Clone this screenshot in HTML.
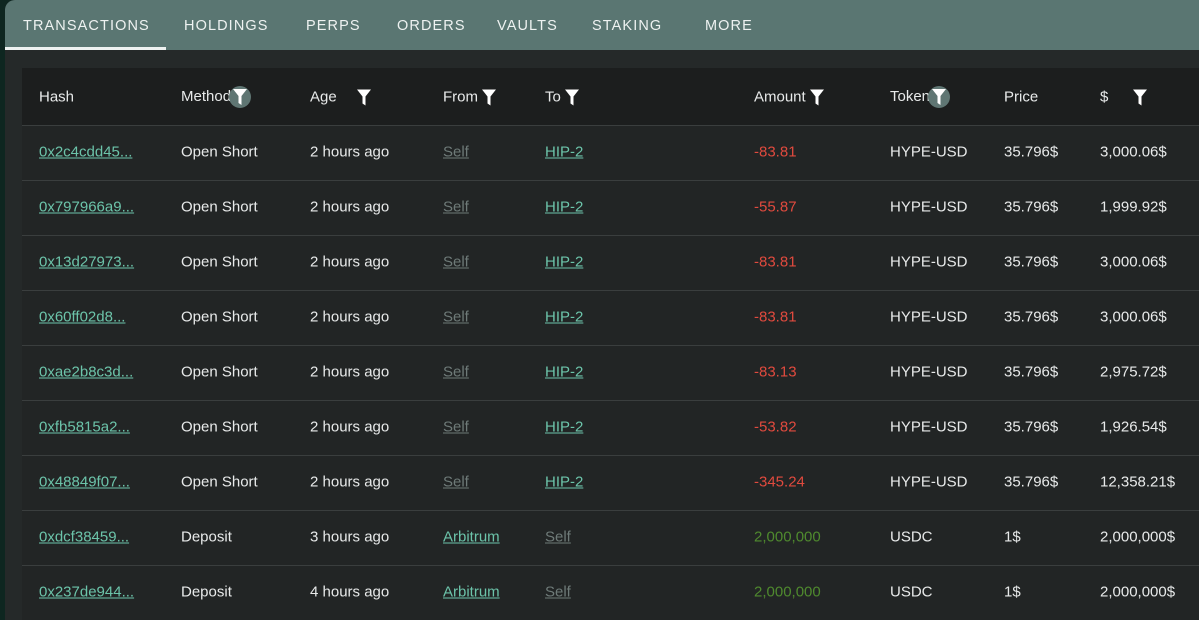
<!DOCTYPE html>
<html><head><meta charset="utf-8"><style>
*{margin:0;padding:0;box-sizing:border-box}
body{width:1199px;height:614px;overflow:hidden;background:#0e2620;font-family:"Liberation Sans",Roboto,sans-serif;color:#e8eaea}
.panel{position:absolute;left:5px;top:0;width:1200px;height:620px;background:#252929;border-top-left-radius:10px;overflow:hidden}
.tabs{height:50px;background:#5a7672;position:relative}
.tab{position:absolute;top:18px;font-size:14.5px;letter-spacing:1.1px;color:#eef2f1;font-weight:500}
.ul{position:absolute;left:0;top:47px;width:161px;height:3px;background:#eef2f1}
.card{position:absolute;left:17px;top:68px;width:1200px;height:560px;background:#222525;border-top-left-radius:8px}
.hdr{height:58px;background:#1c1e1e;position:relative;border-bottom:1px solid #3a3e3e}
.row{height:55px;position:relative;border-bottom:1px solid #3a3e3e}
.row .c{margin-top:-1px}
.c{position:absolute;top:50%;transform:translateY(-50%);font-size:15px;white-space:nowrap}
.hdr .c{font-weight:500}
a{color:#6cc4aa;text-decoration:underline}
.self{color:#6e7a78;text-decoration:underline}
.red{color:#e04a3e}.grn{color:#4f8a2e}
.f{display:inline-block;vertical-align:middle}
.fc{display:inline-block;width:22px;height:22px;border-radius:50%;background:#5f7673;vertical-align:middle;position:relative;margin-left:-2px}
.fc svg{position:absolute;left:4px;top:3px}
</style></head><body>
<div class="panel">
<div class="tabs">
<span class="tab" style="left:18px">TRANSACTIONS</span>
<span class="tab" style="left:179px">HOLDINGS</span>
<span class="tab" style="left:301px">PERPS</span>
<span class="tab" style="left:392px">ORDERS</span>
<span class="tab" style="left:492px">VAULTS</span>
<span class="tab" style="left:587px">STAKING</span>
<span class="tab" style="left:700px">MORE</span>
<div class="ul"></div>
</div>
<div class="card">
<div class="hdr">
<span class="c" style="left:17px">Hash</span>
<span class="c" style="left:159px">Method<span class="fc"><svg width="14" height="16" viewBox="0 0 14 16"><path d="M0 0H14L8.5 7V16L5.5 14V7Z" fill="#fff"/></svg></span></span>
<span class="c" style="left:288px">Age <svg class="f" style="margin-left:16px" width="14" height="16" viewBox="0 0 14 16"><path d="M0 0H14L8.5 7V16L5.5 14V7Z" fill="#fff"/></svg></span>
<span class="c" style="left:421px">From <svg class="f" width="14" height="16" viewBox="0 0 14 16"><path d="M0 0H14L8.5 7V16L5.5 14V7Z" fill="#fff"/></svg></span>
<span class="c" style="left:523px">To <svg class="f" width="14" height="16" viewBox="0 0 14 16"><path d="M0 0H14L8.5 7V16L5.5 14V7Z" fill="#fff"/></svg></span>
<span class="c" style="left:732px">Amount <svg class="f" width="14" height="16" viewBox="0 0 14 16"><path d="M0 0H14L8.5 7V16L5.5 14V7Z" fill="#fff"/></svg></span>
<span class="c" style="left:868px">Token<span class="fc"><svg width="14" height="16" viewBox="0 0 14 16"><path d="M0 0H14L8.5 7V16L5.5 14V7Z" fill="#fff"/></svg></span></span>
<span class="c" style="left:982px">Price</span>
<span class="c" style="left:1078px">$ <svg class="f" style="margin-left:20px" width="14" height="16" viewBox="0 0 14 16"><path d="M0 0H14L8.5 7V16L5.5 14V7Z" fill="#fff"/></svg></span>
</div>
<div class="row"><span class="c" style="left:17px"><a>0x2c4cdd45...</a></span><span class="c" style="left:159px">Open Short</span><span class="c" style="left:288px">2 hours ago</span><span class="c self" style="left:421px">Self</span><span class="c" style="left:523px"><a>HIP-2</a></span><span class="c red" style="left:732px">-83.81</span><span class="c" style="left:868px">HYPE-USD</span><span class="c" style="left:982px">35.796$</span><span class="c" style="left:1078px">3,000.06$</span></div>
<div class="row"><span class="c" style="left:17px"><a>0x797966a9...</a></span><span class="c" style="left:159px">Open Short</span><span class="c" style="left:288px">2 hours ago</span><span class="c self" style="left:421px">Self</span><span class="c" style="left:523px"><a>HIP-2</a></span><span class="c red" style="left:732px">-55.87</span><span class="c" style="left:868px">HYPE-USD</span><span class="c" style="left:982px">35.796$</span><span class="c" style="left:1078px">1,999.92$</span></div>
<div class="row"><span class="c" style="left:17px"><a>0x13d27973...</a></span><span class="c" style="left:159px">Open Short</span><span class="c" style="left:288px">2 hours ago</span><span class="c self" style="left:421px">Self</span><span class="c" style="left:523px"><a>HIP-2</a></span><span class="c red" style="left:732px">-83.81</span><span class="c" style="left:868px">HYPE-USD</span><span class="c" style="left:982px">35.796$</span><span class="c" style="left:1078px">3,000.06$</span></div>
<div class="row"><span class="c" style="left:17px"><a>0x60ff02d8...</a></span><span class="c" style="left:159px">Open Short</span><span class="c" style="left:288px">2 hours ago</span><span class="c self" style="left:421px">Self</span><span class="c" style="left:523px"><a>HIP-2</a></span><span class="c red" style="left:732px">-83.81</span><span class="c" style="left:868px">HYPE-USD</span><span class="c" style="left:982px">35.796$</span><span class="c" style="left:1078px">3,000.06$</span></div>
<div class="row"><span class="c" style="left:17px"><a>0xae2b8c3d...</a></span><span class="c" style="left:159px">Open Short</span><span class="c" style="left:288px">2 hours ago</span><span class="c self" style="left:421px">Self</span><span class="c" style="left:523px"><a>HIP-2</a></span><span class="c red" style="left:732px">-83.13</span><span class="c" style="left:868px">HYPE-USD</span><span class="c" style="left:982px">35.796$</span><span class="c" style="left:1078px">2,975.72$</span></div>
<div class="row"><span class="c" style="left:17px"><a>0xfb5815a2...</a></span><span class="c" style="left:159px">Open Short</span><span class="c" style="left:288px">2 hours ago</span><span class="c self" style="left:421px">Self</span><span class="c" style="left:523px"><a>HIP-2</a></span><span class="c red" style="left:732px">-53.82</span><span class="c" style="left:868px">HYPE-USD</span><span class="c" style="left:982px">35.796$</span><span class="c" style="left:1078px">1,926.54$</span></div>
<div class="row"><span class="c" style="left:17px"><a>0x48849f07...</a></span><span class="c" style="left:159px">Open Short</span><span class="c" style="left:288px">2 hours ago</span><span class="c self" style="left:421px">Self</span><span class="c" style="left:523px"><a>HIP-2</a></span><span class="c red" style="left:732px">-345.24</span><span class="c" style="left:868px">HYPE-USD</span><span class="c" style="left:982px">35.796$</span><span class="c" style="left:1078px">12,358.21$</span></div>
<div class="row"><span class="c" style="left:17px"><a>0xdcf38459...</a></span><span class="c" style="left:159px">Deposit</span><span class="c" style="left:288px">3 hours ago</span><span class="c" style="left:421px"><a>Arbitrum</a></span><span class="c self" style="left:523px">Self</span><span class="c grn" style="left:732px">2,000,000</span><span class="c" style="left:868px">USDC</span><span class="c" style="left:982px">1$</span><span class="c" style="left:1078px">2,000,000$</span></div>
<div class="row"><span class="c" style="left:17px"><a>0x237de944...</a></span><span class="c" style="left:159px">Deposit</span><span class="c" style="left:288px">4 hours ago</span><span class="c" style="left:421px"><a>Arbitrum</a></span><span class="c self" style="left:523px">Self</span><span class="c grn" style="left:732px">2,000,000</span><span class="c" style="left:868px">USDC</span><span class="c" style="left:982px">1$</span><span class="c" style="left:1078px">2,000,000$</span></div>
</div>
</div>
</body></html>
